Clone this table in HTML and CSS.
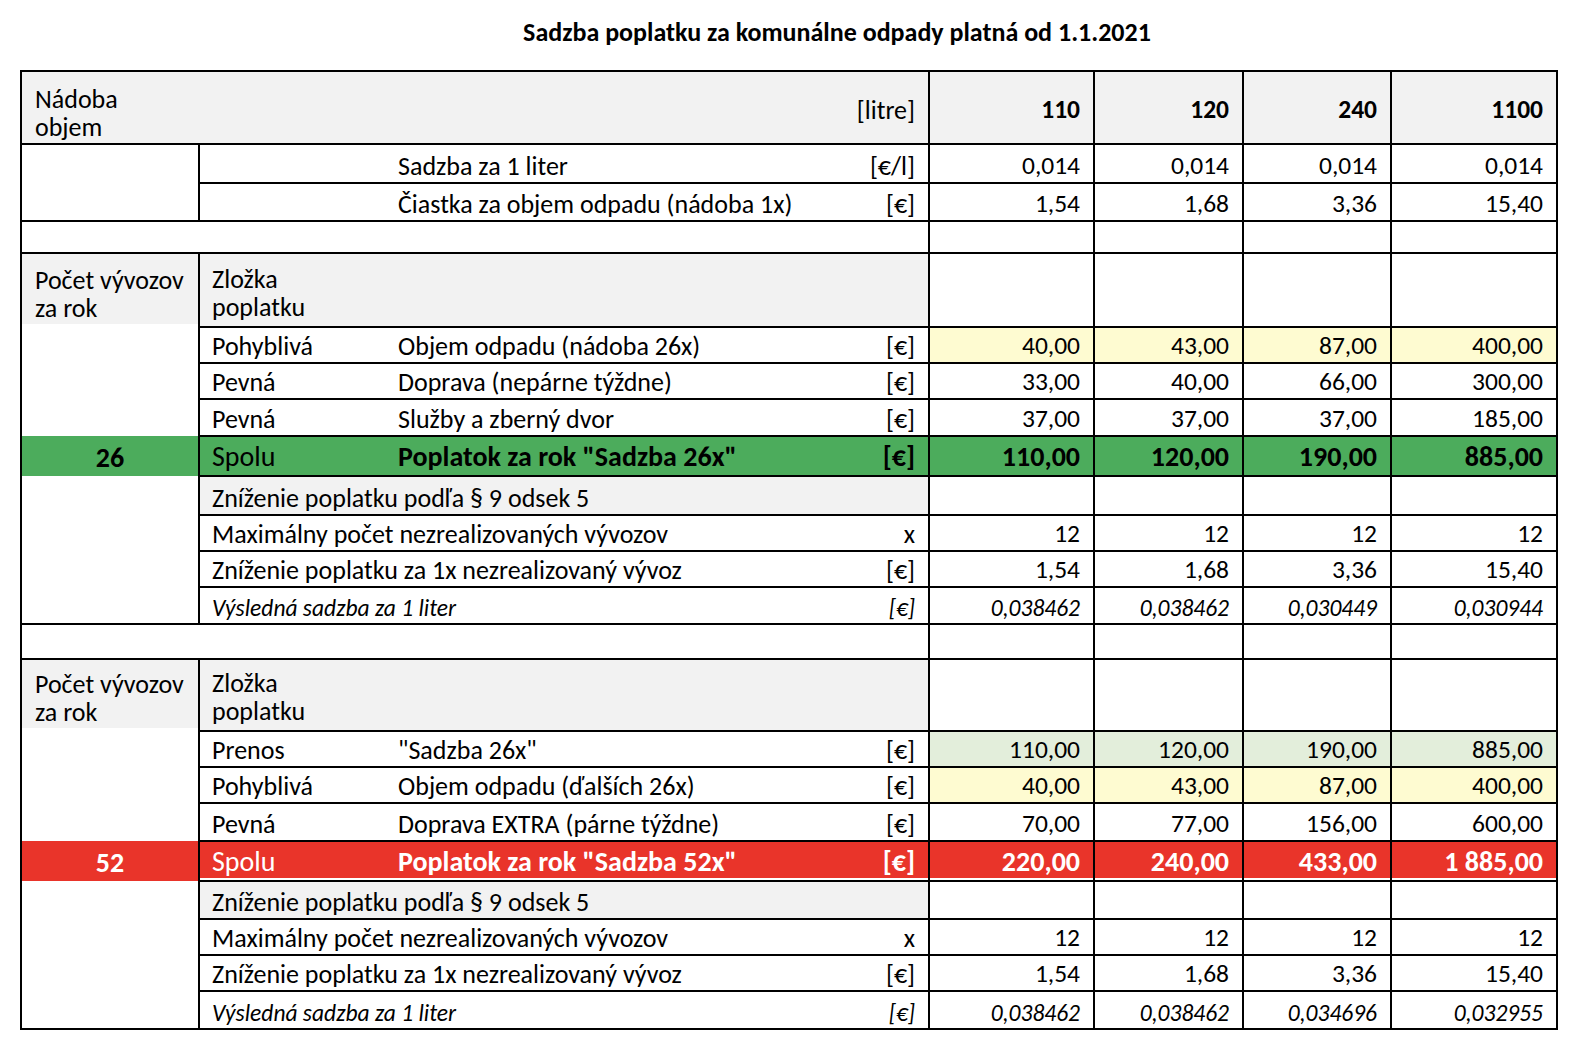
FILE: index.html
```html
<!DOCTYPE html>
<html lang="sk">
<head>
<meta charset="utf-8">
<title>Sadzba poplatku za komunálne odpady</title>
<link rel="stylesheet" href="styles.css">
</head>
<body>
<h1 class="title">Sadzba poplatku za komunálne odpady platná od 1.1.2021</h1>
<table class="fees">
  <colgroup>
    <col class="w-c1"><col class="w-c2"><col class="w-c3"><col class="w-c4">
    <col class="w-v1"><col class="w-v2"><col class="w-v3"><col class="w-v4">
  </colgroup>
  <tbody>
    <tr class="h73">
      <td colspan="3" class="wide gray">Nádoba<br>objem</td>
      <td class="unit gray mid">[litre]</td>
      <td class="v gray mid b">110</td><td class="v gray mid b">120</td><td class="v gray mid b">240</td><td class="v gray mid b">1100</td>
    </tr>
    <tr class="h39">
      <td class="c1"></td><td class="lbl"></td><td class="desc">Sadzba za 1 liter</td><td class="unit">[€/l]</td>
      <td class="v">0,014</td><td class="v">0,014</td><td class="v">0,014</td><td class="v">0,014</td>
    </tr>
    <tr class="h38">
      <td class="c1 end"></td><td class="lbl"></td><td class="desc">Čiastka za objem odpadu (nádoba 1x)</td><td class="unit">[€]</td>
      <td class="v">1,54</td><td class="v">1,68</td><td class="v">3,36</td><td class="v">15,40</td>
    </tr>
    <tr class="h32">
      <td colspan="4" class="wide"></td>
      <td class="v"></td><td class="v"></td><td class="v"></td><td class="v"></td>
    </tr>

    <tr class="h74">
      <td class="c1 gray sec">Počet vývozov<br>za rok</td>
      <td colspan="3" class="lbl gray sec">Zložka<br>poplatku</td>
      <td class="v"></td><td class="v"></td><td class="v"></td><td class="v"></td>
    </tr>
    <tr class="h36">
      <td class="c1"></td><td class="lbl">Pohyblivá</td><td class="desc">Objem odpadu (nádoba 26x)</td><td class="unit">[€]</td>
      <td class="v yellow">40,00</td><td class="v yellow">43,00</td><td class="v yellow">87,00</td><td class="v yellow">400,00</td>
    </tr>
    <tr class="h36">
      <td class="c1"></td><td class="lbl">Pevná</td><td class="desc">Doprava (nepárne týždne)</td><td class="unit">[€]</td>
      <td class="v">33,00</td><td class="v">40,00</td><td class="v">66,00</td><td class="v">300,00</td>
    </tr>
    <tr class="h37">
      <td class="c1"></td><td class="lbl">Pevná</td><td class="desc">Služby a zberný dvor</td><td class="unit">[€]</td>
      <td class="v">37,00</td><td class="v">37,00</td><td class="v">37,00</td><td class="v">185,00</td>
    </tr>
    <tr class="h40 total green">
      <td class="c1 num b">26</td><td class="lbl">Spolu</td><td class="desc b">Poplatok za rok "Sadzba 26x"</td><td class="unit b">[€]</td>
      <td class="v b">110,00</td><td class="v b">120,00</td><td class="v b">190,00</td><td class="v b">885,00</td>
    </tr>
    <tr class="h39">
      <td class="c1"></td><td colspan="3" class="lbl gray">Zníženie poplatku podľa § 9 odsek 5</td>
      <td class="v"></td><td class="v"></td><td class="v"></td><td class="v"></td>
    </tr>
    <tr class="h36">
      <td class="c1"></td><td colspan="2" class="lbl">Maximálny počet nezrealizovaných vývozov</td><td class="unit">x</td>
      <td class="v">12</td><td class="v">12</td><td class="v">12</td><td class="v">12</td>
    </tr>
    <tr class="h36">
      <td class="c1"></td><td colspan="2" class="lbl">Zníženie poplatku za 1x nezrealizovaný vývoz</td><td class="unit">[€]</td>
      <td class="v">1,54</td><td class="v">1,68</td><td class="v">3,36</td><td class="v">15,40</td>
    </tr>
    <tr class="h37 ital">
      <td class="c1 end"></td><td colspan="2" class="lbl">Výsledná sadzba za 1 liter</td><td class="unit">[€]</td>
      <td class="v">0,038462</td><td class="v">0,038462</td><td class="v">0,030449</td><td class="v">0,030944</td>
    </tr>
    <tr class="h35">
      <td colspan="4" class="wide"></td>
      <td class="v"></td><td class="v"></td><td class="v"></td><td class="v"></td>
    </tr>

    <tr class="h72">
      <td class="c1 gray sec">Počet vývozov<br>za rok</td>
      <td colspan="3" class="lbl gray sec">Zložka<br>poplatku</td>
      <td class="v"></td><td class="v"></td><td class="v"></td><td class="v"></td>
    </tr>
    <tr class="h36">
      <td class="c1"></td><td class="lbl">Prenos</td><td class="desc">"Sadzba 26x"</td><td class="unit">[€]</td>
      <td class="v mint">110,00</td><td class="v mint">120,00</td><td class="v mint">190,00</td><td class="v mint">885,00</td>
    </tr>
    <tr class="h36">
      <td class="c1"></td><td class="lbl">Pohyblivá</td><td class="desc">Objem odpadu (ďalších 26x)</td><td class="unit">[€]</td>
      <td class="v yellow">40,00</td><td class="v yellow">43,00</td><td class="v yellow">87,00</td><td class="v yellow">400,00</td>
    </tr>
    <tr class="h38">
      <td class="c1"></td><td class="lbl">Pevná</td><td class="desc">Doprava EXTRA (párne týždne)</td><td class="unit">[€]</td>
      <td class="v">70,00</td><td class="v">77,00</td><td class="v">156,00</td><td class="v">600,00</td>
    </tr>
    <tr class="h40 total red">
      <td class="c1 num b">52</td><td class="lbl">Spolu</td><td class="desc b">Poplatok za rok "Sadzba 52x"</td><td class="unit b">[€]</td>
      <td class="v b">220,00</td><td class="v b">240,00</td><td class="v b">433,00</td><td class="v b">1 885,00</td>
    </tr>
    <tr class="h38">
      <td class="c1"></td><td colspan="3" class="lbl gray">Zníženie poplatku podľa § 9 odsek 5</td>
      <td class="v"></td><td class="v"></td><td class="v"></td><td class="v"></td>
    </tr>
    <tr class="h36">
      <td class="c1"></td><td colspan="2" class="lbl">Maximálny počet nezrealizovaných vývozov</td><td class="unit">x</td>
      <td class="v">12</td><td class="v">12</td><td class="v">12</td><td class="v">12</td>
    </tr>
    <tr class="h36">
      <td class="c1"></td><td colspan="2" class="lbl">Zníženie poplatku za 1x nezrealizovaný vývoz</td><td class="unit">[€]</td>
      <td class="v">1,54</td><td class="v">1,68</td><td class="v">3,36</td><td class="v">15,40</td>
    </tr>
    <tr class="h38 ital">
      <td class="c1 end"></td><td colspan="2" class="lbl">Výsledná sadzba za 1 liter</td><td class="unit">[€]</td>
      <td class="v">0,038462</td><td class="v">0,038462</td><td class="v">0,034696</td><td class="v">0,032955</td>
    </tr>
  </tbody>
</table>
</body>
</html>
```

FILE: styles.css
```css
html, body {
  margin: 0;
  padding: 0;
  background: #ffffff;
}

body {
  font-family: "Carlito", "Lato", "Liberation Sans", sans-serif;
  font-size: 26px;
  color: #000;
}

.title {
  margin: 0;
  height: 70px;
  box-sizing: border-box;
  width: 1578px;
  padding: 17px 0 0 96px;
  text-align: center;
  font-size: 26px;
  line-height: 30px;
  font-weight: 700;
}

.fees {
  margin-left: 20px;
  border-collapse: collapse;
  table-layout: fixed;
  width: 1538px;
  border: 2px solid #000;
}

.w-c1 { width: 178px; }
.w-c2 { width: 199px; }
.w-c3 { width: 440px; }
.w-c4 { width: 91px; }
.w-v1 { width: 165px; }
.w-v2 { width: 149px; }
.w-v3 { width: 148px; }
.w-v4 { width: 166px; }

.fees td {
  border: none;
  border-bottom: 2px solid #000;
  padding: 0 12px 2px 12px;
  vertical-align: bottom;
  white-space: nowrap;
  line-height: 28px;
  overflow: visible;
}

.fees td.c1 {
  border-bottom: none;
  border-right: 2px solid #000;
}

.fees td.c1.end {
  border-bottom: 2px solid #000;
}

.fees td.wide {
  border-right: none;
  padding-left: 13px;
  line-height: 28px;
  padding-bottom: 2px;
}

.fees td.desc {
  padding-left: 0;
}

.fees td.unit {
  text-align: right;
  padding-right: 13px;
  padding-left: 0;
}

.fees td.v {
  border-left: 2px solid #000;
  text-align: right;
  padding-right: 13px;
  font-size: 25.5px;
}

.fees td.mid {
  vertical-align: middle;
  padding-top: 5px;
  padding-bottom: 0;
}

.fees td.sec {
  line-height: 28px;
  padding-bottom: 5px;
}

.fees td.c1.sec {
  padding-left: 13px;
  box-shadow: inset 0 -3px 0 #ffffff;
}

.fees td.num {
  text-align: center;
  padding-left: 0;
  padding-right: 0;
}

.b { font-weight: 700; }

.fees .ital td {
  font-style: italic;
  font-size: 23.5px;
  padding-bottom: 1px;
}

.fees .total td {
  font-size: 28px;
  padding-bottom: 4px;
}

.gray { background: #f2f2f2; }
.yellow { background: #fefbd1; }
.mint { background: #e3eedb; }

.green td { background: #4cac5c; }

.red td {
  background: #e9342a;
  color: #ffffff;
}

.red td:not(.c1) {
  box-shadow: inset 0 -2px 0 #ffffff;
}

.h32 { height: 32px; }
.h35 { height: 35px; }
.h36 { height: 36px; }
.h37 { height: 37px; }
.h38 { height: 38px; }
.h39 { height: 39px; }
.h40 { height: 40px; }
.h72 { height: 72px; }
.h73 { height: 73px; }
.h74 { height: 74px; }
```
